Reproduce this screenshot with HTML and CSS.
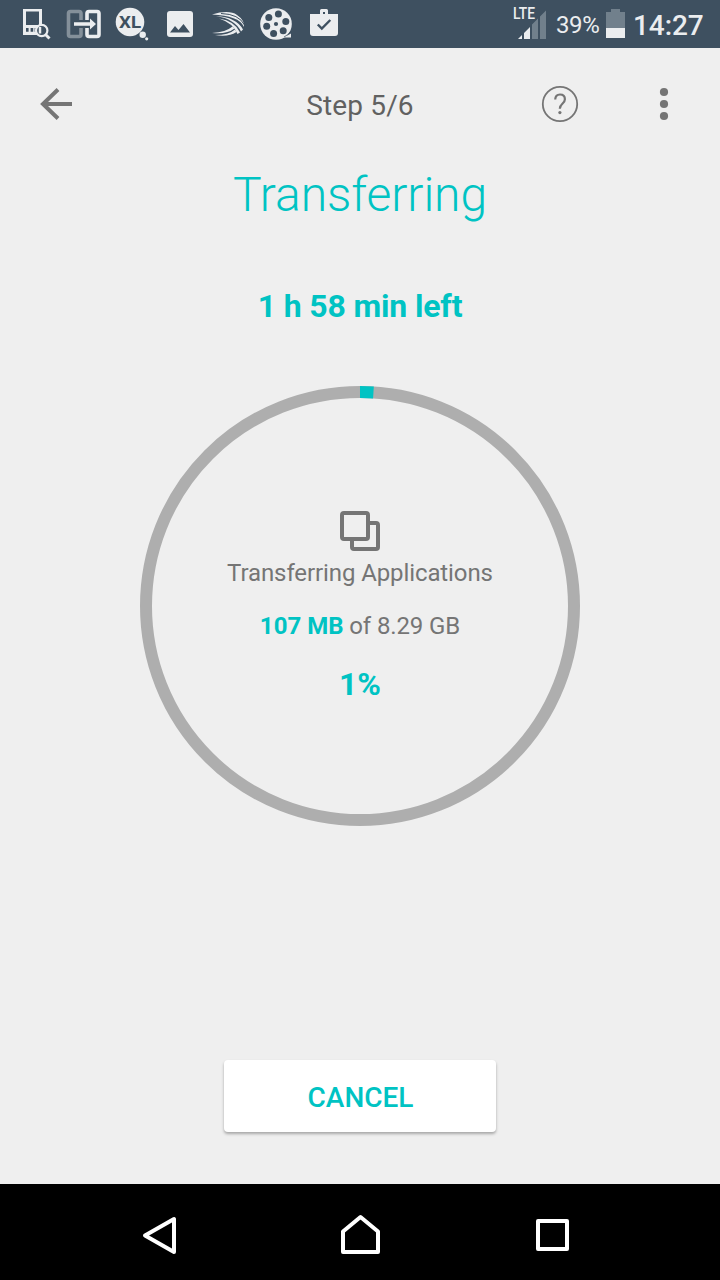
FILE: index.html
```html
<!DOCTYPE html>
<html lang="en">
<head>
<meta charset="utf-8">
<title>Transferring</title>
<link rel="stylesheet" href="styles.css">
</head>
<body>
<div class="screen">
  <header class="status-bar">
    <div class="notifications">
      <svg class="notice" viewBox="12 0 48 48"><path d="M23 9h19v26H23z" fill="#ebedef"/><path d="M26 11.500h13V25H26zM26 28h2.600v3.800H26zM30.600 28h2.600v3.800h-2.600zM34.600 28h1.600v3.800h-1.600z" fill="#3e5060"/><circle cx="41.700" cy="30.500" r="5.700" fill="#3e5060" stroke="#ebedef" stroke-width="2.200"/><path d="M40 27v6.500" stroke="#ebedef" stroke-width="2.500"/><path d="M45.500 34.500l4 4" stroke="#ebedef" stroke-width="3"/></svg>
      <svg class="notice" viewBox="60 0 48 48"><g fill="none" stroke-width="3.600"><path d="M81 20v-6.500q0-2-2-2h-8.500q-2 0-2 2v21q0 2 2 2H79q2 0 2-2V28" stroke="#84909a"/><path d="M87 20v-6.500q0-2 2-2h8q2 0 2 2v21q0 2-2 2h-8q-2 0-2-2V28" stroke="#ebedef"/></g><path d="M74 22.300h16V18.500l6 5.500-6 5.500v-3.800H74z" fill="#ebedef" stroke="#3e5060" stroke-width="1" paint-order="stroke"/></svg>
      <svg class="notice" viewBox="108 0 48 48"><circle cx="130" cy="22" r="14.300" fill="#ebedef"/><circle cx="142.700" cy="34.700" r="3.200" fill="#ebedef"/><circle cx="146.700" cy="38.800" r="1.600" fill="#ebedef"/><text class="xl-label" x="119" y="27.500" textLength="22" lengthAdjust="spacingAndGlyphs">XL</text></svg>
      <svg class="notice" viewBox="156 0 48 48"><rect x="167" y="11" width="26" height="26" rx="3" fill="#ebedef"/><path d="M170 32.500l5-6.500 3.500 4 5-6 6.500 8.500z" fill="#3e5060"/></svg>
      <svg class="notice" viewBox="204 0 48 48"><g fill="#ebedef"><path d="M212 14.500Q229 9.500 237 15Q244.500 20 244 27Q239 15.500 212 14.500z"/><path d="M216 16Q236 17 243 29.500L241 31.500Q235 19 216 16z"/><path d="M219 18.500Q235 21 240 32.500L237.500 34Q233 23 219 18.500z"/><path d="M212 33Q226 32 232.500 26.500L234.500 28.500Q227 34.500 212 33z"/><path d="M215 35Q229 35 235 29.500L236.500 32Q228 37.500 215 35z"/></g><path d="M221 13.500Q239 14 244.500 25" fill="none" stroke="#3e5060" stroke-width="1"/></svg>
      <svg class="notice" viewBox="252 0 48 48"><circle cx="276" cy="24" r="15.800" fill="#ebedef"/><path d="M282 36q4 1 9-2.500v4h-9z" fill="#ebedef"/><g fill="#3e5060"><circle cx="276" cy="24" r="2.100"/><circle cx="278.400" cy="14" r="3.500"/><circle cx="268.800" cy="17.400" r="3.500"/><circle cx="266.700" cy="26.200" r="3.500"/><circle cx="273.600" cy="33.400" r="3.500"/><circle cx="283.200" cy="30.800" r="3.500"/><circle cx="285.800" cy="21.400" r="3.500"/></g><path d="M284 37q4-2 6-5" fill="none" stroke="#3e5060" stroke-width=".7"/></svg>
      <svg class="notice" viewBox="300 0 48 48"><path d="M321.500 14.500v-4h5v4" fill="none" stroke="#ebedef" stroke-width="3" stroke-linejoin="round"/><path d="M310 14h28v19q0 3-3 3h-22q-3 0-3-3z" fill="#ebedef"/><path d="M317.800 24.500l4 4 8.500-8.500" fill="none" stroke="#3e5060" stroke-width="2.400"/></svg>
    </div>
    <div class="system">
      <svg class="signal" viewBox="508 0 42 48"><path d="M518 39l4-4v4zM524 39v-6l6-6v12z" fill="#ebedef"/><path d="M532 39V24.500l6-6V39zM540 39V16.500l6-6V39z" fill="#71808c"/><text class="lte-label" x="513" y="19" textLength="22" lengthAdjust="spacingAndGlyphs">LTE</text></svg>
      <span class="charge">39%</span>
      <svg class="battery" viewBox="606 0 19 48"><path d="M606 12h5V9h9v3h5v16h-19z" fill="#71808c"/><path d="M606 28h19v10h-19z" fill="#ebedef"/></svg>
      <time class="clock">14:27</time>
    </div>
  </header>
  <nav class="toolbar">
    <svg class="back" viewBox="32 80 48 48"><path d="M72 104H43M58 89.500L43 104 58 118.500" fill="none" stroke="#757575" stroke-width="4"/></svg>
    <span class="step">Step 5/6</span>
    <div class="tools">
      <svg class="tool" viewBox="536 80 48 48"><circle cx="560" cy="104" r="17.200" fill="none" stroke="#757575" stroke-width="1.800"/><path d="M555.200 99.500q.2-5 4.800-5 4.900 0 4.900 4.700 0 2.200-2.300 4.300-2.800 2.500-2.800 5.300" fill="none" stroke="#757575" stroke-width="2.200"/><circle cx="559.900" cy="112.600" r="1.600" fill="#757575"/></svg>
      <svg class="tool" viewBox="640 80 48 48" fill="#757575"><circle cx="664" cy="92" r="4.100"/><circle cx="664" cy="104" r="4.100"/><circle cx="664" cy="116" r="4.100"/></svg>
    </div>
  </nav>
  <main class="content">
    <h1 class="title">Transferring</h1>
    <p class="remaining">1 h 58 min left</p>
    <section class="progress">
      <svg class="ring" viewBox="0 0 440 440" fill="none" stroke-width="12"><circle cx="220" cy="220" r="214" stroke="#aeaeae"/><path d="M220 6A214 214 0 0 1 233.440 6.420" stroke="#00c3c3"/></svg>
      <div class="details">
        <svg class="copy" viewBox="0 0 40 40" fill="none" stroke="#757575" stroke-width="4"><rect x="2" y="2" width="26" height="26" rx="2"/><path d="M28 12h8q2 0 2 2v22q0 2-2 2H14q-2 0-2-2v-8"/></svg>
        <p class="label">Transferring Applications</p>
        <p class="amount"><b>107 MB</b> of 8.29 GB</p>
        <p class="percent">1%</p>
      </div>
    </section>
    <button class="cancel">CANCEL</button>
  </main>
  <footer class="nav-bar">
    <svg class="nav-icon" viewBox="136 1208 48 48"><path d="M174 1219v33l-29-16.600z"/></svg>
    <svg class="nav-icon" viewBox="336 1208 48 48"><path d="M343 1252v-20.500l17.500-14.500 17.500 14.500v20.500z"/></svg>
    <svg class="nav-icon" viewBox="528 1208 48 48"><path d="M538 1221h29v28h-29z"/></svg>
  </footer>
</div>
</body>
</html>
```
FILE: styles.css
```css
* { box-sizing: border-box; }
body { margin: 0; font-family: Roboto, "Liberation Sans", sans-serif; }
p, h1 { margin: 0; }
svg { display: block; flex: none; }
.screen { width: 720px; height: 1280px; display: flex; flex-direction: column; background: #efefef; }
.status-bar { height: 48px; display: flex; justify-content: space-between; padding: 0 16px 0 12px; background: #3e5060; color: #ebedef; }
.notifications, .system { display: flex; }
.notice { width: 48px; height: 48px; }
.xl-label { font: bold 16px Roboto, sans-serif; fill: #3e5060; }
.signal { width: 42px; height: 48px; margin-right: 6px; }
.lte-label { font: 500 17px Roboto, sans-serif; fill: #ebedef; }
.charge { width: 43px; margin-right: 7px; font-size: 24px; letter-spacing: -.4px; line-height: 50px; white-space: nowrap; }
.battery { width: 19px; height: 48px; margin-right: 8px; }
.clock { width: 71px; font-size: 28px; font-weight: 500; letter-spacing: -.1px; line-height: 51px; white-space: nowrap; }
.toolbar { height: 112px; padding: 0 32px; display: grid; grid-template-columns: 1fr auto 1fr; align-items: center; }
.back { width: 48px; height: 48px; }
.step { font-size: 28px; letter-spacing: .15px; line-height: 36px; color: #616161; padding-top: 3px; }
.tools { display: flex; justify-content: flex-end; gap: 56px; }
.tool { width: 48px; height: 48px; }
.content { flex: 1; display: flex; flex-direction: column; align-items: center; color: #757575; }
.title { margin-top: 1px; font-size: 48px; font-weight: 300; letter-spacing: -.08px; line-height: 68px; color: #00c3c3; }
.remaining { margin-top: 57px; font-size: 32px; font-weight: 700; letter-spacing: -.15px; line-height: 40px; color: #00c3c3; }
.progress { margin-top: 60px; width: 440px; height: 440px; display: grid; }
.ring, .details { grid-area: 1 / 1; }
.ring { width: 440px; height: 440px; }
.details { display: flex; flex-direction: column; align-items: center; padding-top: 125px; }
.copy { width: 40px; height: 40px; }
.label { margin-top: 6px; font-size: 24px; letter-spacing: -.1px; line-height: 32px; }
.amount { margin-top: 21px; font-size: 24px; letter-spacing: -.12px; line-height: 32px; }
.amount b { font-weight: 700; letter-spacing: 0; color: #00c3c3; }
.percent { margin-top: 22px; font-size: 32px; font-weight: 700; line-height: 40px; color: #00c3c3; }
.cancel { width: 272px; height: 72px; margin-top: 234px; padding: 3px 0 0 1px; border: 0; border-radius: 4px; background: #fff; box-shadow: 0 2px 3px rgba(0,0,0,.3); font: 500 28px Roboto, sans-serif; color: #00c3c3; }
.nav-bar { height: 96px; padding: 24px 144px 24px 136px; display: grid; grid-template-columns: 200px 192px 48px; background: #000; }
.nav-icon { width: 48px; height: 48px; fill: none; stroke: #fff; stroke-width: 4; stroke-linejoin: round; }
```
